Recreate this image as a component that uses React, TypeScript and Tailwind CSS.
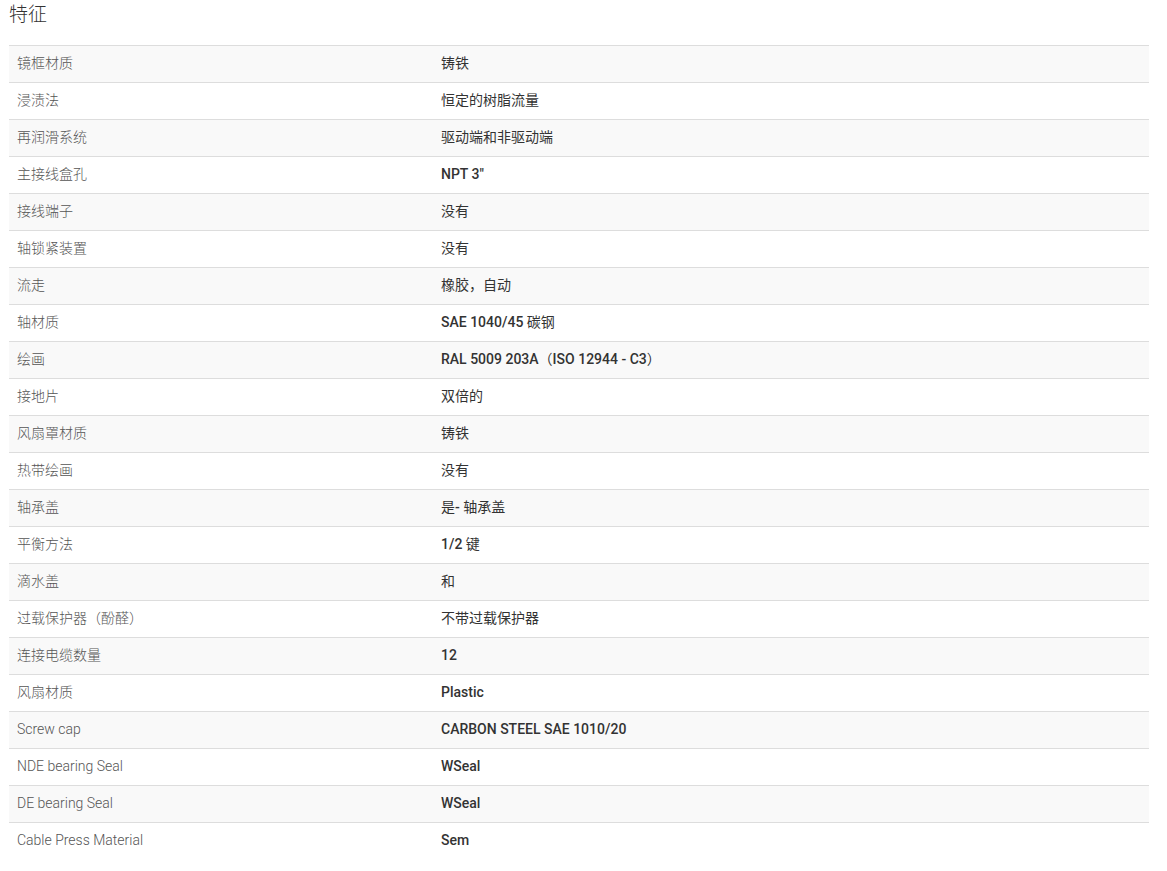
import React from "react";

const rows: [string, string][] = [
  ["镜框材质", "铸铁"],
  ["浸渍法", "恒定的树脂流量"],
  ["再润滑系统", "驱动端和非驱动端"],
  ["主接线盒孔", "NPT 3\""],
  ["接线端子", "没有"],
  ["轴锁紧装置", "没有"],
  ["流走", "橡胶，自动"],
  ["轴材质", "SAE 1040/45 碳钢"],
  ["绘画", "RAL 5009 203A（ISO 12944 - C3）"],
  ["接地片", "双倍的"],
  ["风扇罩材质", "铸铁"],
  ["热带绘画", "没有"],
  ["轴承盖", "是- 轴承盖"],
  ["平衡方法", "1/2 键"],
  ["滴水盖", "和"],
  ["过载保护器（酚醛）", "不带过载保护器"],
  ["连接电缆数量", "12"],
  ["风扇材质", "Plastic"],
  ["Screw cap", "CARBON STEEL SAE 1010/20"],
  ["NDE bearing Seal", "WSeal"],
  ["DE bearing Seal", "WSeal"],
  ["Cable Press Material", "Sem"],
];

function Value({ text }: { text: string }) {
  const parts = text.split(/([\u3000-\u9fff\uff00-\uffef]+)/).filter((p) => p !== "");
  return (
    <>
      {parts.map((p, i) =>
        /[\u3000-\u9fff\uff00-\uffef]/.test(p) ? (
          <span key={i} className="font-normal">
            {p}
          </span>
        ) : (
          <span key={i} className="font-medium">
            {p}
          </span>
        )
      )}
    </>
  );
}

export default function App() {
  return (
    <div
      className="w-[1167px] h-[871px] bg-white px-[9px]"
      style={{ fontFamily: 'Roboto, "Noto Sans CJK SC", sans-serif' }}
    >
      <h3 className="text-[19px] leading-[30px] font-light text-[#333] m-0">特征</h3>
      <div className="mt-[15px] w-[1140px]">
        {rows.map(([k, v], i) => (
          <div
            key={i}
            className={`flex border-t border-[#dddddd] h-[37px] pb-[2px] items-center text-[14px] leading-[20px] ${
              i % 2 === 0 ? "bg-[#f9f9f9]" : "bg-white"
            }`}
          >
            <div className="w-[424px] px-[8px] font-light text-[#555]">{k}</div>
            <div className="flex-1 px-[8px] text-[#333]">
              <Value text={v} />
            </div>
          </div>
        ))}
      </div>
    </div>
  );
}
